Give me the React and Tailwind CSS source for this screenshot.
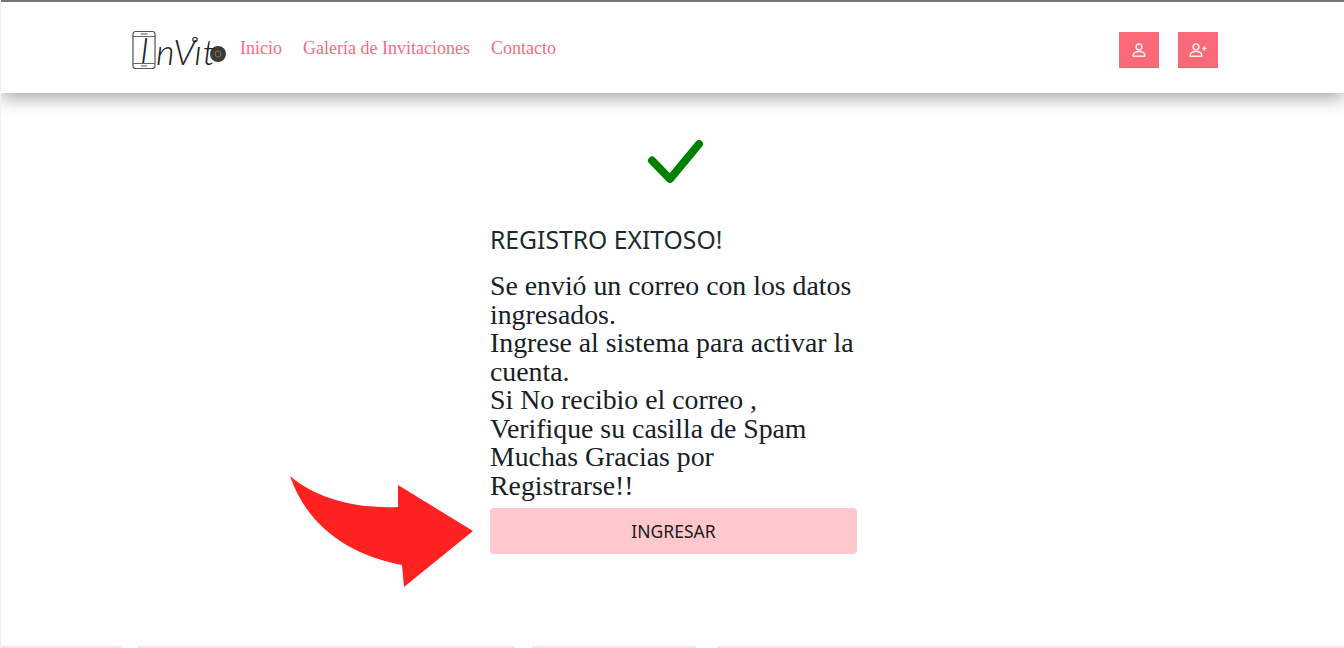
const serif = { fontFamily: '"Liberation Serif", serif' };

function UserIcon({ plus }) {
  return (
    <svg width={plus ? 18 : 14} height="14" viewBox={plus ? "0 0 18 14" : "0 0 14 14"} fill="none" stroke="#ffe9eb" strokeWidth="1.5">
      <circle cx="7" cy="4" r="2.9" />
      <path d="M1.2 12.6c0-2.6 2.2-4 5.800-4s5.800 1.400 5.800 4v.6H1.200z" strokeLinejoin="round" />
      {plus && <path d="M13 5.500h4.500M15.250 3.200v4.600" />}
    </svg>
  );
}

function Logo() {
  return (
    <div className="relative w-[96px] h-[40px] shrink-0 mt-[4px]">
      <svg className="absolute left-0 top-0" width="96" height="40" viewBox="0 0 96 40" fill="none">
        <rect x="1" y="1.500" width="22" height="37" rx="2.500" stroke="#555" strokeWidth="1.200" />
        <path d="M1 6.500h22M1 33.500h22" stroke="#555" strokeWidth="0.900" />
        <path d="M8.500 4h7M9 36h6" stroke="#555" strokeWidth="1" />
        <circle cx="86" cy="24" r="8" fill="#3f3a33" />
        <circle cx="86" cy="24" r="3" fill="none" stroke="#76705f" strokeWidth="1" />
        <circle cx="63" cy="9.500" r="2.200" fill="none" stroke="#444" strokeWidth="1.300" />
      </svg>
      <span className="absolute left-[8px] top-[-1px] text-[36px] leading-[40px] italic text-[#222] whitespace-nowrap" style={{ fontFamily: 'Lato, sans-serif', fontWeight: 300 }}>
        I
      </span>
      <span className="absolute left-[24px] top-[1px] text-[36px] leading-[40px] italic text-[#222] whitespace-nowrap tracking-[0.800px]" style={{ fontFamily: 'Lato, sans-serif', fontWeight: 300 }}>
        nVıt
      </span>
    </div>
  );
}

export default function App() {
  return (
    <div className="relative h-[648px] overflow-hidden bg-white border-l border-[#f1f1f1]" style={{ fontFamily: '"Noto Sans", sans-serif' }}>
      <header className="relative z-10 h-[93px] border-t-2 border-[#757575] bg-white shadow-[0_6px_16px_rgba(0,0,0,0.32)] flex items-center pl-[131px] pr-[126px]">
        <Logo />
        <nav className="flex items-center ml-[12px] gap-[21px] text-[18px] text-[#ef6f80] mt-[2px]" style={serif}>
          <a>Inicio</a>
          <a>Galería de Invitaciones</a>
          <a>Contacto</a>
        </nav>
        <div className="ml-auto flex gap-[19px] mt-[5px]">
          <button className="w-[40px] h-[36px] bg-[#f96a78] flex items-center justify-center border-b border-[#e6626f]"><UserIcon /></button>
          <button className="w-[40px] h-[36px] bg-[#f96a78] flex items-center justify-center border-b border-[#e6626f]"><UserIcon plus /></button>
        </div>
      </header>

      <main className="relative flex flex-col items-center pt-[42px]">
        <svg width="64" height="56" viewBox="0 0 64 56" fill="none" className="ml-[5px]">
          <path d="M9 25.500 L27 44 L56 9" stroke="#008000" strokeWidth="8" strokeLinecap="round" strokeLinejoin="round" />
        </svg>
        <div className="w-[367px] mt-[1px] ml-[2px]">
          <h1 className="text-[24.700px] leading-[34px] text-[#1c2a2e] mt-[31px]" style={{ fontFamily: '"Noto Sans", sans-serif' }}>REGISTRO EXITOSO!</h1>
          <p className="text-[27.800px] leading-[28.500px] text-[#172026] mt-[15px]" style={serif}>
            Se envió un correo con los datos<br />ingresados.<br />Ingrese al sistema para activar la<br />cuenta.<br />Si No recibio el correo ,<br />Verifique su casilla de Spam<br />Muchas Gracias por<br />Registrarse!!
          </p>
          <button className="mt-[8px] w-full h-[46px] rounded-[4px] bg-[#ffc8cd] text-[17.500px] text-[#1b1b1b]">INGRESAR</button>
        </div>
        <svg className="absolute left-[288px] top-[383px]" width="190" height="116" viewBox="0 0 190 116" fill="#ff2220">
          <path d="M1 0 C24 20 62 33 109 31 L109 9 L184 55 L115 111 L113 89 C60 79 18 50 1 0 Z" />
        </svg>
      </main>

      <footer className="absolute left-0 right-0 bottom-0 h-[2px] flex bg-[#ffe1e5]">
        <span className="absolute left-[121px] w-[15px] h-[2px] bg-white" />
        <span className="absolute left-[514px] w-[17px] h-[2px] bg-white" />
        <span className="absolute left-[695px] w-[21px] h-[2px] bg-white" />
      </footer>
    </div>
  );
}
